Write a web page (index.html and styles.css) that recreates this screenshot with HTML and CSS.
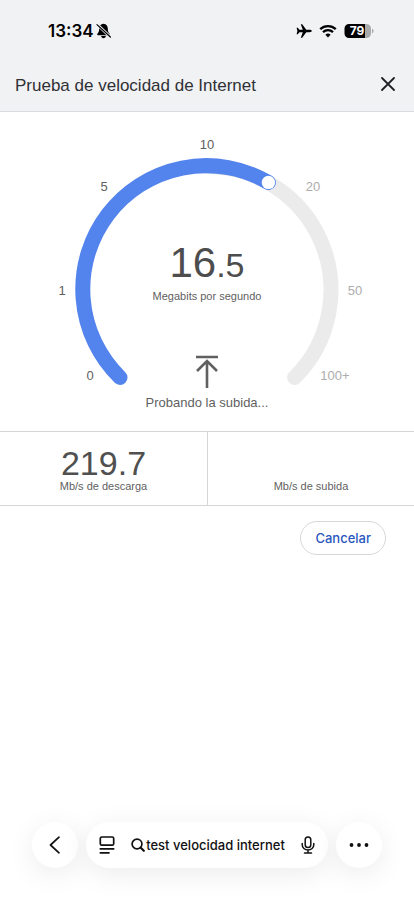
FILE: index.html
```html
<!DOCTYPE html>
<html lang="es">
<head>
<meta charset="utf-8">
<meta name="viewport" content="width=device-width, initial-scale=1">
<title>Prueba de velocidad de Internet</title>
<link rel="stylesheet" href="styles.css">
</head>
<body>
<div class="top">
  <div class="status">
    <div class="status-group">
      <span class="clock">13:34</span>
      <svg class="bell" width="16" height="16" viewBox="0 0 16 16" aria-hidden="true">
        <path d="M7.500 .8C4.600 .8 3.300 3 3.200 5.500C3.100 8.500 2.600 9.400 1.400 10.800C.9 11.500 1.200 12.200 2 12.200H13C13.800 12.200 14.100 11.500 13.600 10.800C12.400 9.400 11.900 8.500 11.800 5.500C11.700 3 10.400 .8 7.500 .8ZM5.200 13H9.800C9.800 14.400 8.800 15.200 7.500 15.200C6.200 15.200 5.200 14.400 5.200 13Z" fill="#000"/>
        <path d="M1.200 1.500L14.400 14" stroke="#f1f2f4" stroke-width="2.800"/>
        <path d="M1 1.600L14.400 14" stroke="#000" stroke-width="1.200" stroke-linecap="round"/>
      </svg>
    </div>
    <div class="status-group status-right">
      <svg width="16" height="16" viewBox="0 0 16 16" aria-hidden="true">
        <path d="M15.800 8C15.800 7.300 14.800 6.800 13.500 6.800H10.300L6.200 1.200H4.800L6.800 6.800H3.400L1.800 4.800H.6L1.400 8L.6 11.200H1.800L3.400 9.200H6.800L4.800 14.800H6.200L10.300 9.200H13.500C14.800 9.200 15.800 8.700 15.800 8Z" fill="#000"/>
      </svg>
      <svg width="18" height="14" viewBox="0 0 18 14" aria-hidden="true">
        <path d="M1.200 5.200A11.200 11.200 0 0 1 16.800 5.200" fill="none" stroke="#000" stroke-width="2.300"/>
        <path d="M4 8.200A7.200 7.200 0 0 1 14 8.200" fill="none" stroke="#000" stroke-width="2.300"/>
        <path d="M9 13.400L6.400 10.700A3.700 3.700 0 0 1 11.600 10.700Z" fill="#000"/>
      </svg>
      <svg class="battery" width="30" height="16" viewBox="0 0 30 16" role="img" aria-label="Batería 79 %">
        <path d="M5 1H21V15H5A4.500 4.500 0 0 1 .5 10.500V5.500A4.500 4.500 0 0 1 5 1Z" fill="#000"/>
        <path d="M21 1H22.500A4.500 4.500 0 0 1 27 5.500V10.500A4.500 4.500 0 0 1 22.500 15H21Z" fill="#a9aaab"/>
        <path d="M28 5.500Q29.600 6.500 29.600 8T28 10.500Z" fill="#a9aaab"/>
        <text class="battery-text" x="13" y="12" text-anchor="middle">79</text>
      </svg>
    </div>
  </div>
  <header class="header">
    <h1 class="title">Prueba de velocidad de Internet</h1>
    <button class="close" type="button" aria-label="Cerrar">
      <svg width="14" height="14" viewBox="0 0 14 14"><path d="M1 1L13 13M13 1L1 13" stroke="#202124" stroke-width="1.800" stroke-linecap="round"/></svg>
    </button>
  </header>
</div>

<main>
  <section class="gauge">
    <svg class="dial" width="414" height="319" viewBox="0 0 414 319">
      <path d="M207 54.500A123.500 123.500 0 0 1 294.600 265.500" fill="none" stroke="#ebebeb" stroke-width="15" stroke-linecap="round"/>
      <path d="M120 265.500A123.500 123.500 0 0 1 268.400 70.400" fill="none" stroke="#5383ec" stroke-width="15" stroke-linecap="round"/>
      <circle cx="268.400" cy="70.400" r="6.700" fill="#fff"/>
      <g class="ticks">
        <text x="90" y="268">0</text>
        <text x="62" y="183">1</text>
        <text x="104" y="79">5</text>
        <text x="207" y="37">10</text>
      </g>
      <g class="ticks ticks-off">
        <text x="313" y="79">20</text>
        <text x="355" y="183">50</text>
        <text x="335" y="268">100+</text>
      </g>
    </svg>
    <div class="reading">
      <div class="speed">16<span class="decimal">.5</span></div>
      <div class="unit">Megabits por segundo</div>
      <svg class="arrow" width="24" height="34" viewBox="0 0 24 34" aria-hidden="true">
        <path d="M1 2H23M12 33V7M2 16L12 6L22 16" fill="none" stroke="#606060" stroke-width="2.600"/>
      </svg>
      <div class="phase">Probando la subida...</div>
    </div>
  </section>

  <section class="results">
    <div class="result"><div class="value">219.7</div><div class="label">Mb/s de descarga</div></div>
    <div class="result"><div class="value"></div><div class="label">Mb/s de subida</div></div>
  </section>

  <div class="actions"><button class="cancel" type="button">Cancelar</button></div>
</main>

<nav class="toolbar">
  <button class="round" type="button" aria-label="Atrás">
    <svg width="12" height="18" viewBox="0 0 12 18"><path d="M10 1.200L1.500 9L10 16.800" fill="none" stroke="#111" stroke-width="1.700" stroke-linecap="round" stroke-linejoin="round"/></svg>
  </button>
  <div class="address">
    <button class="icon" type="button" aria-label="Opciones de página">
      <svg width="16" height="18" viewBox="0 0 16 18"><g fill="none" stroke="#111" stroke-width="1.700" stroke-linecap="round"><rect x="1.300" y="1" width="13.400" height="8.200" rx="1.500"/><path d="M1.300 12.800H14.700M1.300 16.800H10"/></g></svg>
    </button>
    <button class="query" type="button">
      <svg width="14" height="14" viewBox="0 0 14 14" aria-hidden="true"><circle cx="6" cy="6" r="4.900" fill="none" stroke="#111" stroke-width="1.700"/><path d="M9.500 9.500L12.800 12.800" stroke="#111" stroke-width="2.200" stroke-linecap="round"/></svg>
      <span>test velocidad internet</span>
    </button>
    <button class="icon" type="button" aria-label="Dictar">
      <svg width="14" height="18" viewBox="0 0 14 18"><g fill="none" stroke="#111" stroke-width="1.500" stroke-linecap="round"><rect x="4.200" y="1" width="5.600" height="10.600" rx="2.800"/><path d="M1.200 7.500V8.800A5.800 5.300 0 0 0 12.800 8.800V7.500M7 14.200V17M3.500 17H10.500"/></g></svg>
    </button>
  </div>
  <button class="round" type="button" aria-label="Más">
    <svg width="20" height="4" viewBox="0 0 20 4"><g fill="#111"><circle cx="2.500" cy="2" r="1.900"/><circle cx="10" cy="2" r="1.900"/><circle cx="17.500" cy="2" r="1.900"/></g></svg>
  </button>
</nav>
</body>
</html>
```
FILE: styles.css
```css
* {
  box-sizing: border-box;
}

body {
  margin: 0;
  min-height: 100vh;
  display: flex;
  flex-direction: column;
  background: #fff;
  color: #5f5f5f;
  font-family: "Liberation Sans", Arial, sans-serif;
}

button {
  margin: 0;
  padding: 0;
  border: 0;
  background: none;
  color: inherit;
  font: inherit;
}

svg {
  display: block;
  flex: none;
}

.top {
  background: #f1f2f4;
  border-bottom: 1px solid #dadce0;
}

.status {
  display: flex;
  justify-content: space-between;
  align-items: center;
  height: 60px;
  padding: 2px 40px 0 48px;
}

.status-group {
  display: flex;
  align-items: center;
  gap: 2px;
}

.status-right {
  gap: 7px;
}

.clock {
  color: #000;
  font: 600 17px/20px Inter, sans-serif;
}

.battery-text {
  fill: #fff;
  font: 700 12px Inter, sans-serif;
}

.header {
  display: flex;
  justify-content: space-between;
  align-items: flex-start;
  height: 51px;
  padding: 12px 14px 0 15px;
}

.title {
  margin: 0;
  padding-top: 2px;
  color: #303134;
  font-size: 17px;
  line-height: 24px;
  font-weight: 400;
}

.close {
  display: grid;
  place-items: center;
  width: 24px;
  height: 24px;
}

.gauge {
  display: grid;
  justify-content: center;
}

.dial,
.reading {
  grid-area: 1 / 1;
}

.ticks {
  fill: #606060;
  font-size: 13px;
  text-anchor: middle;
}

.ticks-off {
  fill: #adadad;
}

.reading {
  display: flex;
  flex-direction: column;
  align-items: center;
  padding-top: 127px;
}

.speed {
  color: #4d4d4d;
  font-size: 42px;
  line-height: 48px;
}

.decimal {
  font-size: 34px;
}

.unit {
  font-size: 11px;
  line-height: 14px;
}

.arrow {
  margin: 52px 0 4px;
}

.phase {
  font-size: 13px;
  line-height: 20px;
}

.results {
  display: grid;
  grid-template-columns: 1fr 1fr;
  border: solid #d6d6d6;
  border-width: 1px 0;
}

.result {
  padding: 14px 0 11px;
  text-align: center;
}

.result + .result {
  border-left: 1px solid #d6d6d6;
}

.value {
  height: 32px;
  color: #505050;
  font-size: 34px;
  line-height: 34px;
}

.label {
  font-size: 11px;
  line-height: 16px;
}

.actions {
  display: flex;
  justify-content: flex-end;
  padding: 15px 28px;
}

.cancel {
  height: 34px;
  padding: 0 14px;
  border: 1px solid #d6d8dc;
  border-radius: 17px;
  color: #2957bd;
  font: 500 13px/20px Inter, sans-serif;
}

.toolbar {
  display: flex;
  gap: 8px;
  margin-top: auto;
  padding: 0 32px 32px;
}

.round,
.address {
  height: 46px;
  border-radius: 23px;
  background: #fff;
  box-shadow: 0 6px 28px rgba(0, 0, 0, 0.08);
}

.round {
  display: grid;
  place-items: center;
  flex: none;
  width: 46px;
}

.address {
  display: flex;
  flex: 1;
  align-items: center;
  justify-content: space-between;
  padding: 0 13px;
}

.query {
  display: flex;
  align-items: center;
  gap: 1px;
  color: #111;
  font: 500 13px/20px Inter, sans-serif;
}
```
